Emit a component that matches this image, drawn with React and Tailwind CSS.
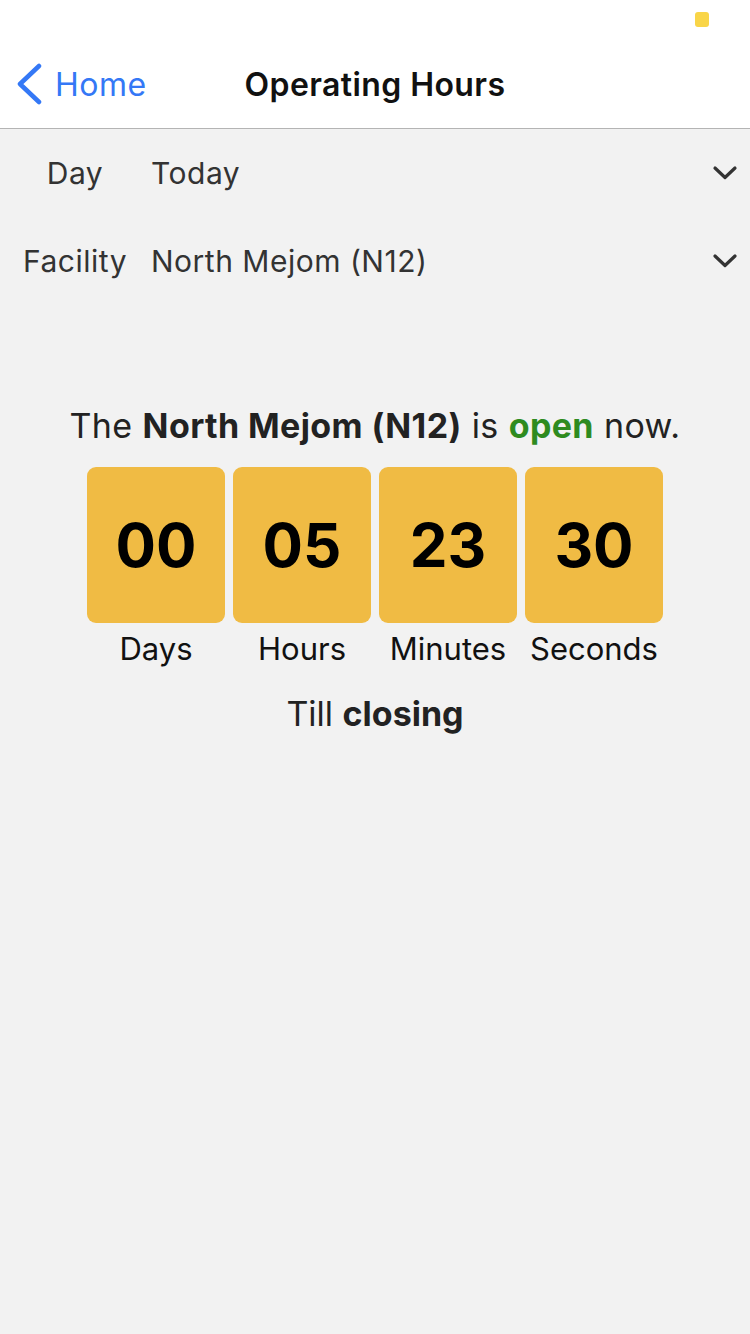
import React from "react";

function Chevron() {
  return (
    <svg width="26" height="16" viewBox="0 0 26 16" fill="none">
      <path d="M3 3 L13 12.5 L23 3" stroke="#333" strokeWidth="3.2" strokeLinecap="round" strokeLinejoin="round" />
    </svg>
  );
}

export default function App() {
  const units = [
    ["00", "Days"],
    ["05", "Hours"],
    ["23", "Minutes"],
    ["30", "Seconds"],
  ];
  return (
    <div className="w-[750px] h-[1334px] bg-[#f2f2f2] flex flex-col" style={{ fontFamily: "Inter, 'Noto Sans', sans-serif" }}>
      <div className="bg-white h-[129px] border-b border-[#b4b4b4] relative flex flex-col">
        <div className="absolute left-[695px] top-[12px] w-[14px] h-[15px] rounded-[3px] bg-[#f9d548]" />
        <div className="mt-[61px] h-[46px] relative flex items-center">
          <div className="flex items-center pl-[16px] gap-[12px]">
            <svg width="27" height="42" viewBox="0 0 27 42" fill="none">
              <path d="M23 3 L4 21 L23 39" stroke="#3478f6" strokeWidth="4.5" strokeLinecap="round" strokeLinejoin="round" />
            </svg>
            <span className="text-[32px] tracking-[0.5px] text-[#3478f6] leading-none mt-[2px]">Home</span>
          </div>
          <div className="absolute inset-0 flex items-center justify-center pointer-events-none">
            <span className="text-[32px] tracking-[0.4px] font-semibold text-[#111] leading-none mt-[2px]">Operating Hours</span>
          </div>
        </div>
      </div>

      <div className="flex flex-col">
        <div className="h-[88px] flex items-center">
          <div className="w-[150px] text-center text-[30px] tracking-[0.5px] text-[#333]">Day</div>
          <div className="ml-[1px] flex-1 text-[30px] tracking-[0.5px] text-[#333]">Today</div>
          <div className="mr-[12px] flex items-center"><Chevron /></div>
        </div>
        <div className="h-[88px] flex items-center">
          <div className="w-[150px] text-center text-[30px] tracking-[0.5px] text-[#333]">Facility</div>
          <div className="ml-[1px] flex-1 text-[30px] tracking-[0.5px] text-[#333]">North Mejom (N12)</div>
          <div className="mr-[12px] flex items-center"><Chevron /></div>
        </div>
      </div>

      <div className="mt-[100px] flex flex-col items-center">
        <div className="text-[34px] tracking-[0.4px] text-[#222] leading-[42px]">
          The <span className="font-bold">North Mejom (N12)</span> is <span className="font-bold text-[#2e8b1f]">open</span> now.
        </div>
        <div className="mt-[20px] flex gap-[8px]">
          {units.map(([v, l]) => (
            <div key={l} className="flex flex-col items-center w-[138px]">
              <div className="w-[138px] h-[156px] rounded-[9px] bg-[#f0bb44] flex items-center justify-center">
                <span className="text-[60px] font-bold text-black leading-none">{v}</span>
              </div>
              <div className="mt-[8px] text-[31px] text-[#111] leading-[36px]">{l}</div>
            </div>
          ))}
        </div>
        <div className="mt-[26px] text-[34px] text-[#222] leading-[42px]">
          Till <span className="font-bold">closing</span>
        </div>
      </div>
    </div>
  );
}
